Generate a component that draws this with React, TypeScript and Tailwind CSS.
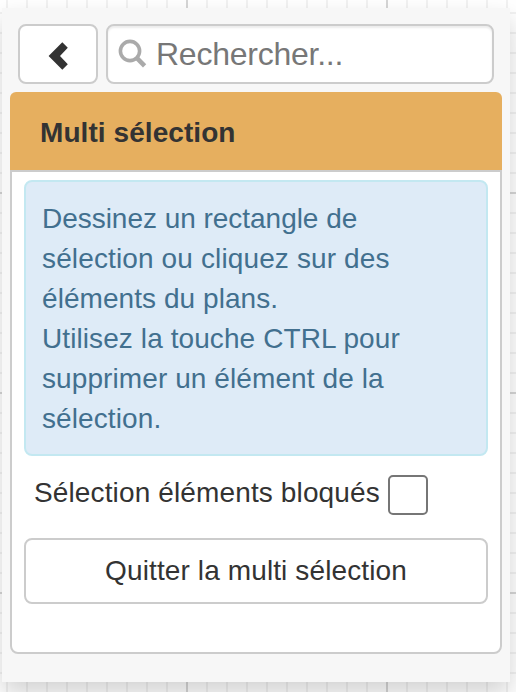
const vertical = Array.from({ length: 26 }, (_, i) => 6 + i * 20);
const horizontal = Array.from({ length: 34 }, (_, i) => 12 + i * 20);

function Grid() {
  return (
    <svg className="absolute inset-0" width="516" height="692" shapeRendering="crispEdges">
      {vertical.map((x) => (
        <rect key={x} x={x} y="0" width="2" height="692" fill={x % 200 === 186 ? "#d6d6d6" : "#f2f2f2"} />
      ))}
      {horizontal.map((y) => (
        <rect key={y} x="0" y={y} width="516" height="2" fill={y % 200 === 192 ? "#d6d6d6" : "#f2f2f2"} />
      ))}
    </svg>
  );
}

function ChevronLeft() {
  return (
    <svg width="20" height="28" viewBox="0 0 20 28" fill="#333333">
      <path d="M.6 14 14.3 .3 19.8 5.7 12 14 19.8 22.3 14.3 27.7Z" />
    </svg>
  );
}

function Search() {
  return (
    <svg className="overflow-visible" width="28" height="28" viewBox="0 0 28 28" fill="none" stroke="#aaaaaa">
      <circle cx="12" cy="11" r="9.6" strokeWidth="3.6" />
      <path d="M18.2 17.4 26.6 25.8" strokeWidth="4.6" />
    </svg>
  );
}

function Toolbar() {
  return (
    <div className="flex h-[60px] gap-2 px-2">
      <button className="flex w-20 items-center justify-center rounded-lg border-2 border-[#cccccc] bg-white pt-[3px]">
        <ChevronLeft />
      </button>
      <div className="flex flex-1 items-center rounded-lg border-2 border-[#cccccc] bg-white pl-[10px] shadow-[inset_0_2px_2px_rgba(0,0,0,0.075)]">
        <Search />
        <span className="ml-2.5 text-[32px] leading-9 tracking-[-0.25px] whitespace-nowrap text-[#777777]">Rechercher...</span>
      </div>
    </div>
  );
}

export default function App() {
  return (
    <div className="relative h-[692px] w-[516px] overflow-hidden bg-white pt-2 pl-0.5 font-['Liberation_Sans',Arial,sans-serif] text-[28px] leading-10 text-[#333333]">
      <Grid />
      <div className="relative h-[674px] w-[508px] bg-[#f7f7f7] px-2 pt-4 shadow-[0_12px_24px_rgba(0,0,0,0.175)]">
        <Toolbar />
        <div className="mt-2 flex h-[562px] flex-col">
          <h3 className="h-[78px] rounded-t-md bg-[#e6af5f] px-[30px] pt-[21px] font-bold tracking-[0.07px] whitespace-nowrap">Multi sélection</h3>
          <div className="flex-1 rounded-b-lg border-2 border-[#cccccc] bg-white px-3 pt-2">
            <div className="h-[276px] rounded-lg border-2 border-[#c3e8f1] bg-[#deebf7] px-4 pt-[17px] whitespace-nowrap text-[#42708f]">
              <p className="tracking-[-0.03px]">Dessinez un rectangle de</p>
              <p className="tracking-[0.13px]">sélection ou cliquez sur des</p>
              <p className="tracking-[0.06px]">éléments du plans.</p>
              <p className="tracking-[0.09px]">Utilisez la touche CTRL pour</p>
              <p className="tracking-[0.09px]">supprimer un élément de la</p>
              <p className="tracking-[0.1px]">sélection.</p>
            </div>
            <label className="mt-[19px] flex h-10 items-start pl-2.5 whitespace-nowrap">
              <span className="-mt-0.5 w-[354px] tracking-[0.13px]">Sélection éléments bloqués</span>
              <span className="size-10 rounded-[5px] border-2 border-[#767676] bg-white" />
            </label>
            <button className="mt-[23px] h-[66px] w-full rounded-lg border-2 border-[#cccccc] bg-white tracking-[0.12px] whitespace-nowrap">
              Quitter la multi sélection
            </button>
          </div>
        </div>
      </div>
    </div>
  );
}
